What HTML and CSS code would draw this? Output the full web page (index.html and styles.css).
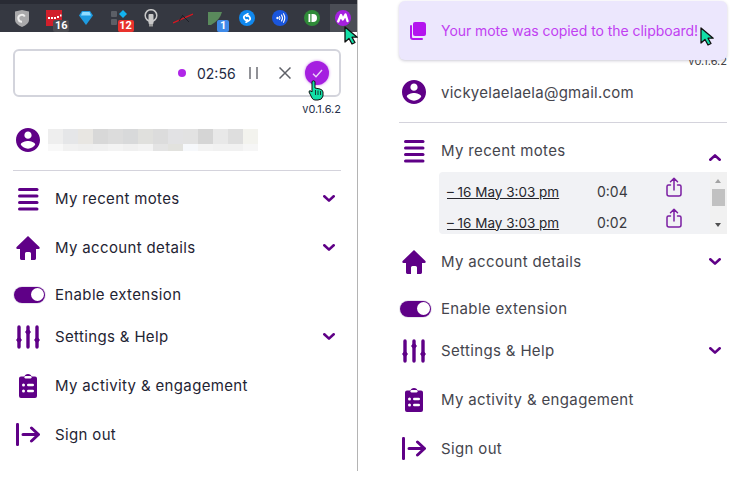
FILE: index.html
```html
<!DOCTYPE html>
<html lang="en">
<head>
<meta charset="utf-8">
<title>Mote</title>
<link rel="stylesheet" href="styles.css">
</head>
<body>
<svg class="defs" width="0" height="0" aria-hidden="true">
  <symbol id="i-user" viewBox="2 2 20 20"><path d="M12 2C6.48 2 2 6.48 2 12s4.48 10 10 10 10-4.48 10-10S17.52 2 12 2zm0 3c1.66 0 3 1.34 3 3s-1.34 3-3 3-3-1.34-3-3 1.34-3 3-3zm0 14.2c-2.5 0-4.71-1.28-6-3.22.03-1.99 4-3.08 6-3.08 1.99 0 5.97 1.09 6 3.08-1.29 1.94-3.5 3.22-6 3.22z"/></symbol>
  <symbol id="i-list" viewBox="0 0 24 24"><rect x="2" y="1" width="20.500" height="3" rx="1.500"/><rect x="2" y="7.500" width="20.500" height="3" rx="1.500"/><rect x="2" y="14" width="20.500" height="3" rx="1.500"/><rect x="2" y="20.500" width="20.500" height="3" rx="1.500"/></symbol>
  <symbol id="i-home" viewBox="0 0 24 24"><path d="M12 0 L23.400 11 Q24.300 12.800 22.500 13 L20 13 L20 22.600 Q20 24 18.600 24 L15 24 L15 17.500 Q15 16 13.500 16 L10.500 16 Q9 16 9 17.500 L9 24 L5.400 24 Q4 24 4 22.600 L4 13 L1.500 13 Q-.3 12.800 .6 11 Z"/></symbol>
  <symbol id="i-sliders" viewBox="0 0 24 24"><g fill="none" stroke="currentColor" stroke-width="3.400" stroke-linecap="round"><path d="M3 2v20M12 2v20M21 2v20"/></g><path d="M3 11.500l3 3.500-3 3.500-3-3.500zM12 3.500l3 3.500-3 3.500-3-3.500zM21 11.500l3 3.500-3 3.500-3-3.500z"/></symbol>
  <symbol id="i-clip" viewBox="0 0 24 24"><path d="M5 2.500h3.500Q9 0 12 0t3.500 2.500H19q2 0 2 2V22q0 2-2 2H5q-2 0-2-2V4.500q0-2 2-2z"/><g fill="#fff"><rect x="8.500" y="2" width="7" height="2.500" rx="1.200"/><circle cx="7.500" cy="11" r="1.500"/><rect x="11" y="9.700" width="7" height="2.600" rx="1.300"/><circle cx="7.500" cy="17" r="1.500"/><rect x="11" y="15.700" width="7" height="2.600" rx="1.300"/></g></symbol>
  <symbol id="i-out" viewBox="0 0 24 24"><rect x="0" y="0" width="3" height="23" rx="1.200"/><path d="M7 11.500h15M15.500 5l7 6.500-7 6.500" fill="none" stroke="currentColor" stroke-width="3" stroke-linecap="round" stroke-linejoin="round"/></symbol>
  <symbol id="i-share" viewBox="0 0 16 20"><path d="M8 13V1.500M4.500 4.800 8 1.200l3.500 3.600M4.500 8H2.500Q1 8 1 9.500V17q0 2 2 2h10q2 0 2-2V9.500Q15 8 13.500 8h-2" fill="none" stroke="currentColor" stroke-width="1.500" stroke-linecap="round" stroke-linejoin="round"/></symbol>
  <symbol id="i-chev" viewBox="0 0 12 7"><path d="M1.300 1.300 6 5.600l4.700-4.300" fill="none" stroke="currentColor" stroke-width="2.600" stroke-linecap="round" stroke-linejoin="round"/></symbol>
  <symbol id="i-arrow" viewBox="0 0 14 19"><path d="M1 1v15l4-3.500 3 5.500 3-1.500-3-5.300h5.200z" fill="#12dfa7" stroke="#111" stroke-width="1.300" stroke-linejoin="round"/></symbol>
</svg>

<main class="page">
  <section class="shot shot-left">
    <header class="toolbar">
      <div class="tool"><svg width="14" height="17" viewBox="0 0 14 17"><path d="M0 1.500 7 0l7 1.500V10q0 4-7 7-7-3-7-7z" fill="#a9a9ab"/><path d="M9.800 6.500A3.500 3.500 0 1 0 7 11.800" fill="none" stroke="#eee" stroke-width="2"/></svg></div>
      <div class="tool"><svg width="16" height="16" viewBox="0 0 16 16"><rect width="16" height="16" fill="#d11f2b"/><g fill="#fff"><rect x="2" y="7" width="2" height="2"/><rect x="5" y="7" width="2" height="2"/><rect x="8" y="7" width="2" height="2"/><rect x="11" y="6" width="2" height="2"/><rect x="14" y="4.500" width="1.500" height="2"/></g></svg><span class="badge badge-grey">16</span></div>
      <div class="tool"><svg width="14" height="14" viewBox="0 0 14 14"><path d="M3 0h8l3 4.500L7 14 0 4.500z" fill="#1e9be0"/><path d="M3.500 1h7l1.500 3.500H2z" fill="#8fdcff"/></svg></div>
      <div class="tool"><svg width="16" height="16" viewBox="0 0 16 16"><rect x="0" y="1" width="6" height="6" rx="1" fill="#5c5f66"/><rect x="0" y="9" width="6" height="6" rx="1" fill="#5c5f66"/><path d="M12 0l4 4-4 4-4-4z" fill="#12b4f0"/></svg><span class="badge badge-red">12</span></div>
      <div class="tool"><svg width="14" height="18" viewBox="0 0 14 18"><circle cx="7" cy="6.500" r="5.800" fill="none" stroke="#c8c8c8" stroke-width="1.500"/><rect x="4.500" y="5" width="5" height="10" rx="1" fill="#c8c8c8"/><rect x="5" y="15" width="4" height="2.500" fill="#9a9a9a"/></svg></div>
      <div class="tool"><svg width="20" height="12" viewBox="0 0 20 12"><path d="M0 11 20 2" stroke="#e0141e" stroke-width="1.300"/><path d="M10 3 6 9M9 3l7 7" stroke="#1d1f26" stroke-width="1"/></svg></div>
      <div class="tool"><svg width="14" height="15" viewBox="0 0 14 15"><path d="M0 1h14Q12 9 3 14H0z" fill="#5a8a5c"/></svg><span class="badge badge-blue">1</span></div>
      <div class="tool"><svg width="16" height="16" viewBox="0 0 16 16"><circle cx="8" cy="8" r="8" fill="#1088ee"/><path d="M9 3.800 6 5.400Q4 6.700 5.300 8.800t3 1M7 12.200l3-1.600q2-1.300.7-3.400t-3-1" fill="none" stroke="#fff" stroke-width="1.700" stroke-linecap="round"/></svg></div>
      <div class="tool"><svg width="16" height="16" viewBox="0 0 16 16"><circle cx="8" cy="8" r="8" fill="#1a56dc"/><g fill="none" stroke="#fff" stroke-width="1.100" stroke-linecap="round"><path d="M7.500 6.500q1 1.500 0 3M9.500 5q2 3 0 6M11.500 3.800q2.600 4.200 0 8.400"/></g><circle cx="5.500" cy="8" r="1.200" fill="#fff"/></svg></div>
      <div class="tool"><svg width="16" height="16" viewBox="0 0 16 16"><circle cx="8" cy="8" r="8" fill="#2f8a38"/><path d="M4.500 4h1.800v8H4.500zM7.500 4H9a4 4 0 0 1 0 8H7.500z" fill="#fff"/></svg></div>
      <div class="tool tool-active"><svg width="16" height="16" viewBox="0 0 16 16"><circle cx="8" cy="8" r="8" fill="#a51fe0"/><path d="M3.200 11.500 6 5l1.800 4.500L10.500 4.500l2 6.500" fill="none" stroke="#fff" stroke-width="2.400" stroke-linejoin="round" stroke-linecap="round"/></svg></div>
    </header>

    <div class="popup">
      <div class="recorder">
        <span class="rec-dot"></span>
        <span class="rec-time">02:56</span>
        <svg class="rec-pause" width="9" height="12" viewBox="0 0 9 12"><path d="M1 0v12M8 0v12" stroke="#6d6f76" stroke-width="1.500"/></svg>
        <svg class="rec-close" width="12" height="12" viewBox="0 0 12 12"><path d="M.5.500l11 11M11.500.500l-11 11" stroke="#5f6168" stroke-width="1.500"/></svg>
        <span class="rec-done"><svg width="11" height="9" viewBox="0 0 11 9"><path d="M1 4.800 4 7.800 10 1" fill="none" stroke="#ecd6f8" stroke-width="1.300"/></svg></span>
      </div>
      <p class="version">v0.1.6.2</p>
      <div class="account">
        <svg class="icon"><use href="#i-user"/></svg>
        <svg class="blurred" width="210" height="22" viewBox="0 0 210 22" aria-hidden="true">
          <g>
            <rect x="0" width="15" height="15" fill="#eeeeee"/><rect x="15" width="15" height="15" fill="#e5e6e8"/><rect x="30" width="15" height="15" fill="#e8e6e2"/><rect x="45" width="15" height="15" fill="#d8d8d8"/><rect x="60" width="15" height="15" fill="#dcdcdc"/><rect x="75" width="15" height="15" fill="#d8d9da"/><rect x="90" width="15" height="15" fill="#e0e0dd"/><rect x="105" width="15" height="15" fill="#dcdcdc"/><rect x="120" width="15" height="15" fill="#e2e2e4"/><rect x="135" width="15" height="15" fill="#e2e2e2"/><rect x="150" width="15" height="15" fill="#d5d5d5"/><rect x="165" width="15" height="15" fill="#e8e8e8"/><rect x="180" width="15" height="15" fill="#dedede"/><rect x="195" width="15" height="15" fill="#f3f3ee"/>
            <rect x="0" y="15" width="15" height="7" fill="#f8f8f8"/><rect x="15" y="15" width="15" height="7" fill="#f1f1f1"/><rect x="30" y="15" width="15" height="7" fill="#efefef"/><rect x="45" y="15" width="15" height="7" fill="#f0f0f0"/><rect x="60" y="15" width="15" height="7" fill="#f3f3f3"/><rect x="75" y="15" width="15" height="7" fill="#f0f0f0"/><rect x="90" y="15" width="15" height="7" fill="#f3f3f3"/><rect x="105" y="15" width="15" height="7" fill="#e4e4e4"/><rect x="120" y="15" width="15" height="7" fill="#e2e2de"/><rect x="135" y="15" width="15" height="7" fill="#f6f8fb"/><rect x="150" y="15" width="15" height="7" fill="#f3f3f3"/><rect x="165" y="15" width="15" height="7" fill="#f1f1f1"/><rect x="180" y="15" width="15" height="7" fill="#f1f1f1"/><rect x="195" y="15" width="15" height="7" fill="#f6f6f6"/>
          </g>
        </svg>
      </div>
      <hr class="rule">
      <nav class="menu">
        <div class="row"><svg class="icon"><use href="#i-list"/></svg><span class="label">My recent motes</span><svg class="chev"><use href="#i-chev"/></svg></div>
        <div class="row"><svg class="icon"><use href="#i-home"/></svg><span class="label">My account details</span><svg class="chev"><use href="#i-chev"/></svg></div>
        <div class="row row-toggle"><span class="toggle"><span class="knob"></span></span><span class="label">Enable extension</span></div>
        <div class="row"><svg class="icon"><use href="#i-sliders"/></svg><span class="label">Settings &amp; Help</span><svg class="chev"><use href="#i-chev"/></svg></div>
        <div class="row"><svg class="icon"><use href="#i-clip"/></svg><span class="label">My activity &amp; engagement</span></div>
        <div class="row"><svg class="icon"><use href="#i-out"/></svg><span class="label">Sign out</span></div>
      </nav>
    </div>
    <svg class="cursor cursor-toolbar"><use href="#i-arrow"/></svg>
    <svg class="cursor-hand" width="16" height="21" viewBox="0 0 16 21"><path d="M4 1.500q1.500-1.500 3 0V8l5 1q3 1 3 3v4q-1 4-5 4H7q-2 0-3-2L1 12q0-2 2-1l1 1z" fill="#12dfa7" stroke="#111" stroke-width="1"/><path d="M7.500 10v5M10 10.500V15M12.500 11v4" stroke="#111" stroke-width=".8"/></svg>
  </section>

  <section class="shot shot-right">
    <div class="popup">
      <p class="version">v0.1.6.2</p>
      <div class="account">
        <svg class="icon"><use href="#i-user"/></svg>
        <span class="email">vickyelaelaela@gmail.com</span>
      </div>
      <hr class="rule">
      <nav class="menu">
        <div class="row row-open"><svg class="icon"><use href="#i-list"/></svg><span class="label">My recent motes</span><svg class="chev chev-up"><use href="#i-chev"/></svg></div>
        <div class="motes">
          <div class="motes-list">
            <div class="mote"><a class="mote-title">– 16 May 3:03 pm</a><span class="mote-len">0:04</span><svg class="mote-share"><use href="#i-share"/></svg></div>
            <div class="mote"><a class="mote-title">– 16 May 3:03 pm</a><span class="mote-len">0:02</span><svg class="mote-share"><use href="#i-share"/></svg></div>
          </div>
          <div class="scrollbar"><span class="sb-up"></span><span class="sb-thumb"></span><span class="sb-down"></span></div>
        </div>
        <div class="row"><svg class="icon"><use href="#i-home"/></svg><span class="label">My account details</span><svg class="chev"><use href="#i-chev"/></svg></div>
        <div class="row row-toggle"><span class="toggle"><span class="knob"></span></span><span class="label">Enable extension</span></div>
        <div class="row"><svg class="icon"><use href="#i-sliders"/></svg><span class="label">Settings &amp; Help</span><svg class="chev"><use href="#i-chev"/></svg></div>
        <div class="row"><svg class="icon"><use href="#i-clip"/></svg><span class="label">My activity &amp; engagement</span></div>
        <div class="row"><svg class="icon"><use href="#i-out"/></svg><span class="label">Sign out</span></div>
      </nav>
    </div>
    <div class="toast">
      <svg class="toast-icon" width="16" height="18" viewBox="0 0 16 18"><path d="M5 0h8q3 0 3 3v9q0 2-2 2H5q-2 0-2-2V2q0-2 2-2z" fill="#b415ee"/><path d="M1 4v11q0 2 2 2h9" fill="none" stroke="#b415ee" stroke-width="2" stroke-linecap="round"/></svg>
      <span class="toast-text">Your mote was copied to the clipboard!</span>
    </div>
    <svg class="cursor cursor-toast"><use href="#i-arrow"/></svg>
  </section>
</main>
</body>
</html>
```
FILE: styles.css
```css
* { box-sizing: border-box; }
html, body { margin: 0; padding: 0; background: #fff; }
body { font-family: Inter, "Liberation Sans", sans-serif; overflow: hidden; }
.defs { position: absolute; }
.page { display: flex; align-items: flex-start; width: 731px; height: 481px; }
.shot { position: relative; }
.shot-left { width: 358px; height: 471px; border-right: 1px solid #b4b4b4; color: #1f2433; }
.shot-right { width: 373px; height: 481px; padding: 53px 4px 0 41px; color: #45454d; }

.toolbar { display: flex; align-items: center; height: 32px; padding-left: 6px; background: #353841; border-top: 4px solid #292b34; }
.tool { position: relative; display: flex; align-items: center; justify-content: center; flex: 0 0 32.2px; height: 28px; }
.tool-active { background: #4a4d55; flex: 0 0 27px; margin-left: 2px; }
.badge { position: absolute; display: block; font: 700 11px/12px Roboto, sans-serif; color: #fff; text-align: center; border-radius: 2px; }
.badge-grey { left: 15px; top: 16px; width: 16px; background: #4a4c52; }
.badge-red { left: 15px; top: 16px; width: 16px; background: #e8322d; }
.badge-blue { left: 18px; top: 16px; width: 12px; background: #3f8ae8; }

.shot-left .popup { margin: 17px 0 0 13px; }
.popup { width: 328px; }
.recorder { display: flex; align-items: center; height: 48px; padding-right: 10px; border: 2px solid #d3d4dc; border-radius: 6px; justify-content: flex-end; }
.rec-dot { width: 8px; height: 8px; border-radius: 50%; background: #b026e8; margin-right: 11px; }
.rec-time { font-size: 14px; color: #1f2b44; width: 37px; margin-right: 15px; white-space: nowrap; }
.rec-pause { margin-right: 21px; }
.rec-close { margin-right: 14px; }
.rec-done { display: flex; align-items: center; justify-content: center; width: 24px; height: 24px; border-radius: 50%; background: #a51fe0; box-shadow: 0 0 3px #c77ae8; }

.version { margin: 4px 0 0; height: 16px; font-size: 11px; line-height: 16px; text-align: right; color: #444; }
.shot-left .version { color: #26304a; }
.shot-right .version { margin-top: 0; }
.account { display: flex; align-items: center; height: 24px; margin: 11px 0 18px; padding-left: 3px; }
.icon { flex: none; width: 24px; height: 24px; fill: #5f0087; color: #5f0087; }
.blurred { margin-left: 8px; }
.email { margin-left: 15px; font-size: 15px; letter-spacing: .25px; white-space: nowrap; }
.rule { margin: 0; border: 0; border-top: 1px solid #d4d3dc; }

.menu { padding-top: 3px; }
.row { display: flex; align-items: center; height: 49px; padding-left: 3px; }
.label { margin-left: 15px; font-size: 15px; letter-spacing: .35px; white-space: nowrap; }
.chev { width: 12px; height: 7px; margin-left: auto; margin-right: 6px; color: #5f0087; }
.chev-up { transform: rotate(180deg); margin-top: 14px; }
.row-open { margin-bottom: -3px; }
.row-toggle { height: 35px; margin-top: 5px; padding-left: 1px; }
.row-toggle .label { margin-left: 10px; }
.toggle { display: block; flex: none; width: 31px; height: 16px; padding: 1.500px; border-radius: 8px; background: #5f0087; box-shadow: 0 0 0 1px #e9e5ef; }
.knob { display: block; width: 13px; height: 13px; margin-left: auto; border-radius: 50%; background: #fff; }

.motes { display: flex; height: 62px; margin: 0 0 3px 40px; background: #f1f2f5; border-radius: 4px 0 0 4px; }
.motes-list { flex: 1; padding: 4px 0 0 8px; }
.mote { display: flex; align-items: center; height: 31px; }
.mote-title { width: 150px; font-size: 13.500px; color: #26262c; text-decoration: underline; white-space: nowrap; }
.mote-len { width: 69px; font-size: 14px; color: #3a3a40; }
.mote-share { width: 16px; height: 20px; margin-top: -10px; color: #7b1ea2; }
.scrollbar { position: relative; flex: none; width: 17px; background: #f1f1f1; }
.sb-up, .sb-down { position: absolute; left: 5px; width: 0; height: 0; border-left: 3.500px solid transparent; border-right: 3.500px solid transparent; }
.sb-up { top: 7px; border-bottom: 4px solid #a3a3a3; }
.sb-down { bottom: 7px; border-top: 4px solid #505050; }
.sb-thumb { position: absolute; left: 2px; top: 17px; width: 13px; height: 17px; background: #c1c1c1; }

.toast { position: absolute; left: 41px; top: 1px; display: flex; align-items: center; width: 328px; height: 59px; padding: 0 0 0 11px; border-radius: 6px; background: #ece7fd; box-shadow: 0 1px 3px rgba(60, 50, 90, .25); }
.toast-text { margin-left: 15px; font-size: 14px; letter-spacing: -.05px; color: #c13ff2; white-space: nowrap; }
.cursor { position: absolute; width: 14px; height: 19px; }
.cursor-toolbar { left: 344px; top: 26px; }
.cursor-toast { left: 342px; top: 27px; }
.cursor-hand { position: absolute; left: 308px; top: 80px; }
```
